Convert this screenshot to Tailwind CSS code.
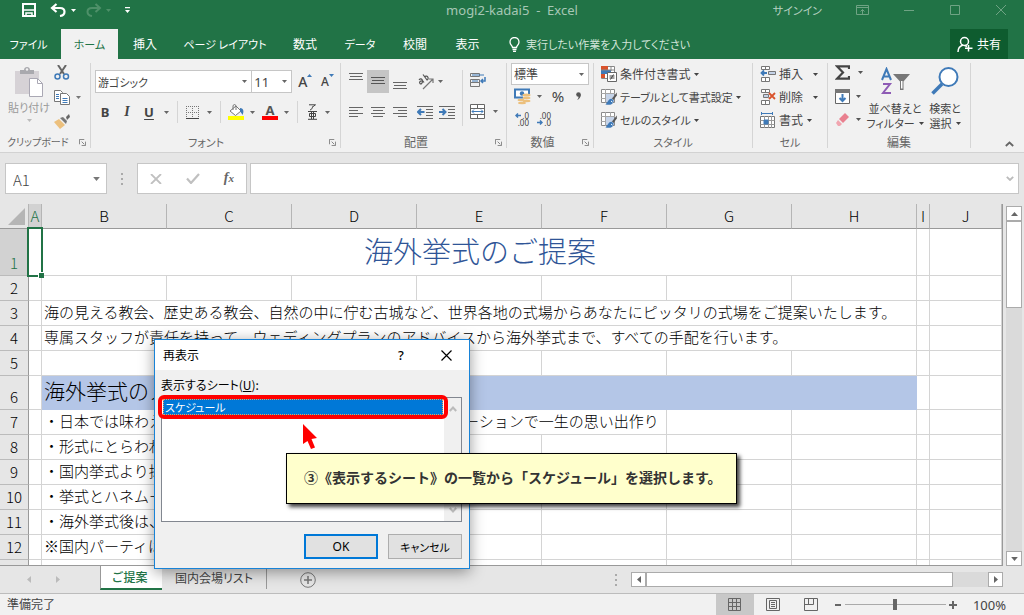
<!DOCTYPE html>
<html lang="ja">
<head>
<meta charset="utf-8">
<title>mogi2-kadai5 - Excel</title>
<script src="https://cdn.jsdelivr.net/npm/@tailwindcss/browser@4"></script>
</head>
<body class="relative flex h-screen flex-col overflow-hidden bg-[#e6e6e6] font-['Noto_Sans_CJK_JP',sans-serif] text-[12px] leading-4 text-[#444]">

<svg class="hidden" aria-hidden="true">
  <symbol id="dn" viewBox="0 0 5 3"><path d="M0 0h5L2.5 3z" fill="currentColor"/></symbol>
  <symbol id="launch" viewBox="0 0 8 8"><path d="M.5 6V.5H6M3 3l3 3M7.500 3v4.500H3" fill="none" stroke="#777"/></symbol>
  <symbol id="brushcell" viewBox="0 0 16 16">
    <path d="M.5.5h13v13H.5z" fill="#fff" stroke="#8a8a8a"/><path d="M5 5h8v8H5z" fill="#c5d3e8"/><path d="M0 4.500h14M0 9.500h5M4.500 0v14M9.500 0v5" stroke="#a5a5a5" fill="none"/>
    <path d="M15.800 3.500v3l-3.300 4.500-1.500-1.500z" fill="#555"/><path d="M11 10c-3-1-4 3-6.500 5.500 4 .8 8 .5 8-4z" fill="#3f7ab8"/><path d="M10 12l1.500 1.200" stroke="#fff"/>
  </symbol>
</svg>

<!-- Title bar -->
<header class="shrink-0 bg-[#217346] text-white">
  <div class="flex h-[29px] items-start pt-0.5">
    <div class="flex h-4 flex-1 items-center">
      <button aria-label="上書き保存" class="ml-[22px]"><svg class="block h-[14px] w-[14px]" viewBox="0 0 14 14"><path d="M1 1h12v12H1z" fill="none" stroke="#fff" stroke-width="2"/><path d="M1 7h12" stroke="#fff" stroke-width="1.500"/><path d="M4 13v-3h6v3" fill="none" stroke="#fff" stroke-width="1.500"/></svg></button>
      <button aria-label="元に戻す" class="ml-[14px]"><svg class="block h-[14px] w-4" viewBox="0 0 16 14"><path d="M2 5h8c6 0 6 7 0 8M6.500 1L2 5l4.500 4" fill="none" stroke="#fff" stroke-width="2.200"/></svg></button>
      <svg class="ml-[5px] h-[3px] w-[5px]"><use href="#dn"/></svg>
      <button aria-label="やり直し" class="ml-[10px] text-[#4e9069]"><svg class="block h-[14px] w-4" viewBox="0 0 16 14"><path d="M14 5H6c-6 0-6 7 0 8M9.500 1L14 5l-4.500 4" fill="none" stroke="currentColor" stroke-width="2"/></svg></button>
      <svg class="ml-1 h-[3px] w-[5px] text-[#4e9069]"><use href="#dn"/></svg>
      <button aria-label="クイック アクセス ツール バーのカスタマイズ" class="ml-[14px]"><svg class="block h-[7px] w-[5px]" viewBox="0 0 5 7"><path d="M0 0h5v1.200H0zM0 3h5L2.500 6z" fill="#fff"/></svg></button>
    </div>
    <h1 class="whitespace-pre font-['Noto_Sans','Noto_Sans_CJK_JP',sans-serif] text-[13px] text-[#a6c7b5]">mogi2-kadai5  -  Excel</h1>
    <div class="flex h-4 flex-1 items-center justify-end text-[#6fa384]">
      <a href="#" class="mr-[34px] text-[11px] text-[#b5d0c0] [font-feature-settings:'palt']">サインイン</a>
      <button aria-label="リボンの表示オプション"><svg class="block h-[11px] w-[13px]" viewBox="0 0 13 11" fill="none" stroke="currentColor"><path d="M.5.5h12v9H.5zM0 2.500h13M6.500 9V4.500M4.500 6.500l2-2 2 2"/></svg></button>
      <button aria-label="最小化" class="ml-[35px]"><svg class="block h-[11px] w-[10px]" viewBox="0 0 10 11"><path d="M0 5.500h10" stroke="currentColor"/></svg></button>
      <button aria-label="最大化" class="ml-9"><svg class="block h-[10px] w-[10px]" viewBox="0 0 10 10"><path d="M.5.5h9v9h-9z" fill="none" stroke="currentColor"/></svg></button>
      <button aria-label="閉じる" class="mr-[18px] ml-9"><svg class="block h-[10px] w-[10px]" viewBox="0 0 10 10"><path d="M0 0l10 10M10 0L0 10" stroke="currentColor"/></svg></button>
    </div>
  </div>
  <nav class="flex h-[30px] items-stretch text-[12px] whitespace-nowrap [font-feature-settings:'palt']">
    <button class="w-[61px] pr-1 text-[11px]">ファイル</button>
    <button class="w-[57px] bg-[#f1f1f1] text-[11px] text-[#217346]">ホーム</button>
    <button class="w-[54px]">挿入</button>
    <button class="w-[106px] text-[11px]">ページ レイアウト</button>
    <button class="w-[54px]">数式</button>
    <button class="w-[56px] text-[11px]">データ</button>
    <button class="w-[54px]">校閲</button>
    <button class="w-[51px]">表示</button>
    <button class="ml-4 flex items-center gap-1.5 text-[11px] text-[#d3e5da]">
      <svg class="h-[15px] w-[11px]" viewBox="0 0 11 15" fill="none" stroke="#fff" stroke-width="1.300"><path d="M3.500 10.500c0-2-2.500-2.500-2.500-5.500a4.500 4.500 0 019 0c0 3-2.500 3.500-2.500 5.500zM3.500 12.500h4M4 14.300h3"/></svg>
      実行したい作業を入力してください
    </button>
    <button class="mr-4 ml-auto flex w-[58px] items-center gap-1 bg-[#0e5c2f] pl-[7px]">
      <svg class="h-4 w-4" viewBox="0 0 16 16" fill="none" stroke="#fff" stroke-width="1.500"><circle cx="7.500" cy="5.500" r="4"/><path d="M1 16c0-4 2-6 5-7M8 9.500l2 1M11.500 9v6.500M8 12.300h7.500"/></svg>共有
    </button>
  </nav>
</header>

<!-- Ribbon -->
<section class="flex h-[94px] shrink-0 border-b border-[#d2d2d2] bg-[#f1f1f1] pt-1 pb-1 whitespace-nowrap [font-feature-settings:'palt']">
  <!-- Clipboard -->
  <div class="flex w-[91px] flex-col border-r border-[#d5d5d5]">
    <div class="flex h-[73px] shrink-0">
      <button class="flex w-[54px] flex-col items-center justify-start pt-1 pl-1 text-[#9a9a9a]">
        <svg class="h-[30px] w-7 shrink-0" viewBox="0 0 28 30"><path d="M0 4h24v23H0z" fill="#d6d2d6"/><path d="M5 7V3h4c0-4 6-4 6 0h4v4z" fill="#a9a9ae"/><circle cx="12" cy="2.500" r="1.200" fill="#f1f1f1"/><path d="M14.500 11.500h8l5 5v13h-13z" fill="#fff" stroke="#aaa8b4"/><path d="M22.500 11.500v5h5" fill="none" stroke="#aaa8b4"/></svg>
        <span class="mt-0.5 text-[11px]">貼り付け</span>
        <svg class="mt-1 h-[3px] w-[5px] text-[#bbb]"><use href="#dn"/></svg>
      </button>
      <div class="flex flex-col justify-between pt-0.5 pb-1.5">
        <button aria-label="切り取り"><svg class="block h-[15px] w-4" viewBox="0 0 16 15" fill="none"><path d="M4 0l6 9M12 0L6 9" stroke="#666" stroke-width="2"/><circle cx="3.500" cy="11.500" r="2.500" stroke="#3f7ab8" stroke-width="1.500"/><circle cx="12" cy="11.500" r="2.500" stroke="#3f7ab8" stroke-width="1.500"/></svg></button>
        <button aria-label="コピー" class="flex items-center gap-1.5 text-[#777]"><svg class="h-[15px] w-4" viewBox="0 0 16 15" fill="#fff" stroke="#777"><path d="M.5.5h6l2 2v9h-8z"/><path d="M6.500 3.500h6l3 3v8h-9z"/><path d="M2 4.500h3M2 6.500h3M2 8.500h3M8.500 8.500h5M8.500 10.500h5M8.500 12.500h5" stroke="#3f7ab8"/></svg><svg class="h-[3px] w-[5px]"><use href="#dn"/></svg></button>
        <button aria-label="書式のコピー"><svg class="block h-4 w-4" viewBox="0 0 16 16"><path d="M12 3l3-3 1 3-3 3z" fill="#666"/><path d="M6 4l3-1 4 4-1 3z" fill="#777"/><path d="M5 5l6 6-5 4L0 8z" fill="#ecc07d"/></svg></button>
      </div>
    </div>
    <div class="flex items-center justify-between pr-1 pl-[7px] text-[10px] leading-3 text-[#666]"><span>クリップボード</span><svg class="h-[7px] w-[7px]"><use href="#launch"/></svg></div>
  </div>
  <!-- Font -->
  <div class="flex w-[250px] flex-col border-r border-[#d5d5d5]">
    <div class="flex h-[73px] shrink-0 flex-col pl-1">
      <div class="mt-[7px] flex h-[23px] items-center">
        <div class="flex h-[23px] w-[158px] items-center border border-[#c6c6c6] bg-white pr-1"><select aria-label="フォント" class="min-w-0 flex-1 appearance-none pl-0.5 text-[11px] [font-feature-settings:'palt']"><option>游ゴシック</option></select><svg class="h-[3px] w-[5px] text-[#666]"><use href="#dn"/></svg></div>
        <div class="flex h-[23px] w-10 items-center border border-l-0 border-[#c6c6c6] bg-white pr-1"><select aria-label="フォント サイズ" class="min-w-0 flex-1 appearance-none pl-0.5 font-['Noto_Sans'] text-[13px]"><option>11</option></select><svg class="h-[3px] w-[5px] text-[#666]"><use href="#dn"/></svg></div>
        <button aria-label="フォント サイズの拡大" class="ml-1 flex w-[21px] items-start pl-0.5 font-['Noto_Sans'] text-[14px] font-medium"><span>A</span><svg class="h-[3px] w-[5px] text-[#3f7ab8]" viewBox="0 0 5 3"><path d="M0 3h5L2.500 0z" fill="currentColor"/></svg></button>
        <button aria-label="フォント サイズの縮小" class="ml-0.5 flex w-[21px] items-start pl-0.5 font-['Noto_Sans'] text-[12px] font-medium"><span>A</span><svg class="h-[3px] w-[5px] text-[#3f7ab8]"><use href="#dn"/></svg></button>
      </div>
      <div class="mt-2 flex h-[22px] items-center text-[#666]">
        <button aria-label="太字" class="w-5 font-['Noto_Sans'] text-[13px] font-bold text-[#444]">B</button>
        <button aria-label="斜体" class="w-6 font-['Liberation_Serif'] text-[14px] font-bold text-[#444] italic">I</button>
        <button aria-label="下線" class="w-5 font-['Noto_Sans'] text-[13px] font-bold text-[#444] underline underline-offset-2">U</button>
        <svg class="ml-[5px] h-[3px] w-[5px]"><use href="#dn"/></svg>
        <span class="ml-2 h-[22px] w-px bg-[#d5d5d5]"></span>
        <button aria-label="罫線" class="ml-2"><svg class="block h-[13px] w-[13px]" viewBox="0 0 13 13" fill="none" stroke="#777"><path d="M.5 0v12M6.500 0v12M12.500 0v12M0 .5h13M0 6.500h13" stroke-dasharray="1 1"/><path d="M0 12.500h13" stroke="#444"/></svg></button>
        <svg class="ml-2 h-[3px] w-[5px]"><use href="#dn"/></svg>
        <span class="ml-2 h-[22px] w-px bg-[#d5d5d5]"></span>
        <button aria-label="塗りつぶしの色" class="ml-[7px]"><svg class="block h-4 w-4" viewBox="0 0 16 16"><path d="M2 7l6-5 5 5-5.500 4.500z" fill="#fff" stroke="#777"/><path d="M5 6V1.500q1.500-2 3 0V6" fill="none" stroke="#777"/><path d="M12 4c4 0 4 4 2.500 7-1-2-1.500-2-2.500-4z" fill="#3f7ab8"/><path d="M0 12h16v4H0z" fill="#ff0"/></svg></button>
        <svg class="ml-1.5 h-[3px] w-[5px]"><use href="#dn"/></svg>
        <button aria-label="フォントの色" class="ml-[7px] flex w-4 flex-col items-center"><span class="h-3 font-['Noto_Sans'] text-[13px] leading-3 font-bold text-[#555]">A</span><span class="h-1 w-4 bg-[#f00]"></span></button>
        <svg class="ml-1.5 h-[3px] w-[5px]"><use href="#dn"/></svg>
        <span class="ml-2 h-[22px] w-px bg-[#d5d5d5]"></span>
        <button aria-label="ふりがなの表示" class="ml-2.5"><svg class="block h-4 w-[9px]" viewBox="0 0 9 16" fill="none" stroke="#444"><path d="M1 .8h6.500L4.500 3M4.500 2.500C4.500 4.500 3.500 5.500 2 6M0 7.500h9M1.500 9.500h6v3h-6zM3.500 7.500v7.500M5.500 7.500v7.500M0 15.300h9"/></svg></button>
        <svg class="ml-2 h-[3px] w-[5px]"><use href="#dn"/></svg>
      </div>
    </div>
    <div class="flex items-center pr-1 text-[11px] leading-3 text-[#666]"><span class="flex-1 pr-2 text-center">フォント</span><svg class="h-[7px] w-[7px]"><use href="#launch"/></svg></div>
  </div>
  <!-- Alignment -->
  <div class="flex w-[166px] flex-col border-r border-[#d5d5d5]">
    <div class="flex h-[73px] shrink-0 pt-[7px] text-[#666]">
      <div class="flex w-[121px] flex-col gap-2 pl-1">
        <div class="flex h-[23px] items-center">
          <button aria-label="上揃え" class="w-[22px]"><svg class="mx-auto block h-[23px] w-[14px]" viewBox="0 0 14 23" stroke="#666"><path d="M0 3.500h14M1 6.500h12M0 9.500h14"/></svg></button>
          <button aria-label="上下中央揃え" class="w-[22px] bg-[#c5c5c5]"><svg class="mx-auto block h-[23px] w-[14px]" viewBox="0 0 14 23" stroke="#555"><path d="M0 7.500h14M1 10.500h12M0 13.500h14"/></svg></button>
          <button aria-label="下揃え" class="w-[22px]"><svg class="mx-auto block h-[23px] w-[14px]" viewBox="0 0 14 23" stroke="#666"><path d="M0 12.500h14M1 15.500h12M0 18.500h14"/></svg></button>
          <button aria-label="方向" class="ml-1.5 flex items-center gap-1"><svg class="h-[17px] w-[17px]" viewBox="0 0 17 17" fill="none" stroke="#555"><path d="M2 7c1.500-2 3-1 3.500.5l1.500 2M5.500 8C3 7.500 2 9.500 3 10.500s2.500 0 2.500-2.500M6 1.500l4 5.500M7.500 4c1-1.500 3-1 3.500.5S10.500 7 9.500 7" stroke-width="1.200"/><path d="M6 16l9.500-9.500M12 6h4v4" stroke="#777" stroke-width="1.200"/></svg><svg class="h-[3px] w-[5px]"><use href="#dn"/></svg></button>
        </div>
        <div class="flex h-[22px] items-center">
          <button aria-label="左揃え" class="w-[22px]"><svg class="mx-auto block h-3 w-[14px]" viewBox="0 0 14 12" stroke="#666"><path d="M0 1.500h14M0 4.500h9M0 7.500h14M0 10.500h9"/></svg></button>
          <button aria-label="中央揃え" class="w-[22px]"><svg class="mx-auto block h-3 w-[14px]" viewBox="0 0 14 12" stroke="#666"><path d="M0 1.500h14M2 4.500h10M0 7.500h14M2 10.500h10"/></svg></button>
          <button aria-label="右揃え" class="w-[22px]"><svg class="mx-auto block h-3 w-[14px]" viewBox="0 0 14 12" stroke="#666"><path d="M0 1.500h14M5 4.500h9M0 7.500h14M5 10.500h9"/></svg></button>
          <button aria-label="インデントを減らす" class="ml-1.5"><svg class="block h-[14px] w-4" viewBox="0 0 16 14" fill="none"><path d="M0 1.500h16M9 4.500h7M9 7.500h7M9 10.500h7M0 13.500h16" stroke="#666"/><path d="M7.500 7H1M4 4L1 7l3 3" stroke="#3f7ab8" stroke-width="2"/></svg></button>
          <button aria-label="インデントを増やす" class="ml-1.5"><svg class="block h-[14px] w-4" viewBox="0 0 16 14" fill="none"><path d="M0 1.500h16M9 4.500h7M9 7.500h7M9 10.500h7M0 13.500h16" stroke="#666"/><path d="M0 7h6.500M3.500 4l3 3-3 3" stroke="#3f7ab8" stroke-width="2"/></svg></button>
        </div>
      </div>
      <div class="mb-[10px] flex flex-col gap-4 border-l border-[#d5d5d5] pt-0.5 pl-[7px]">
        <button aria-label="折り返して全体を表示する"><svg class="block h-4 w-4" viewBox="0 0 16 16" fill="none"><path d="M.5 1.500h9v3h-9zM.5 7.500h9v3h-9zM.5 10.500h9v4h-9z" stroke="#777"/><path d="M2 3h12M2 9h6" stroke="#3f7ab8"/><path d="M15 5v4h-4M13 7l-2 2 2 2" stroke="#3f7ab8" stroke-width="1.500"/></svg></button>
        <button aria-label="セルを結合して中央揃え" class="flex items-center gap-2"><svg class="h-[15px] w-[15px]" viewBox="0 0 15 15" fill="none"><path d="M.5.500h14v14H.5zM.5 4.500h14M.5 10.500h14M7.500 0v4M7.500 11v4" stroke="#666" fill="#fff"/><path d="M2 7.500h11M4 5.500l-2 2 2 2M11 5.500l2 2-2 2" stroke="#3f7ab8"/></svg><svg class="h-[3px] w-[5px]"><use href="#dn"/></svg></button>
      </div>
    </div>
    <div class="flex items-center pr-1 leading-3 text-[#666]"><span class="flex-1 pr-1 text-center">配置</span><svg class="h-[7px] w-[7px]"><use href="#launch"/></svg></div>
  </div>
  <!-- Number -->
  <div class="flex w-[87px] flex-col border-r border-[#d5d5d5]">
    <div class="flex h-[73px] shrink-0 flex-col pl-1 text-[#666]">
      <div class="flex h-[22px] w-[78px] items-center border border-[#c6c6c6] bg-white pr-1"><select aria-label="表示形式" class="min-w-0 flex-1 appearance-none pl-0.5 text-[12px] text-[#444]"><option>標準</option></select><svg class="h-[3px] w-[5px]"><use href="#dn"/></svg></div>
      <div class="mt-0.5 flex h-[18px] items-center pl-[3px]">
        <button aria-label="通貨表示形式" class="flex items-center gap-1.5"><svg class="h-[17px] w-[17px]" viewBox="0 0 17 17"><path d="M1 1.500h14v8H1z" fill="#fff" stroke="#3f7ab8" stroke-width="2"/><circle cx="8" cy="5.500" r="2.200" fill="#3f7ab8"/><path d="M9 6h7v9H9z" fill="#f1f1f1"/><g fill="#ecc07d"><ellipse cx="12.500" cy="7" rx="4" ry="1.500"/><ellipse cx="12.500" cy="10" rx="4" ry="1.200"/><ellipse cx="12.500" cy="13" rx="4" ry="1.200"/><ellipse cx="7" cy="12" rx="3.500" ry="1.200"/><ellipse cx="8" cy="15" rx="4" ry="1.200"/></g></svg><svg class="h-[3px] w-[5px]"><use href="#dn"/></svg></button>
        <button aria-label="パーセント スタイル" class="ml-2 w-4 font-['Noto_Sans'] text-[15px] text-[#444]">%</button>
        <button aria-label="桁区切りスタイル" class="ml-1.5 h-[18px] w-3"><svg class="mx-auto block h-2 w-[5px]" viewBox="0 0 5 8"><circle cx="2.500" cy="2.500" r="2.300" fill="#555"/><path d="M4.800 2.500c0 3-1.500 4.500-3.800 5.500 1.500-1.500 1.500-2 1.500-4z" fill="#555"/></svg></button>
      </div>
      <div class="mt-1 flex h-5 items-center gap-[7px] pl-[3px] font-['Noto_Sans'] text-[8px] leading-[7px] text-[#444]">
        <button aria-label="小数点以下の表示桁数を増やす" class="flex w-[15px] flex-col items-end"><span class="flex items-center gap-px"><svg class="h-[5px] w-[6px]" viewBox="0 0 6 5"><path d="M6 2.500H1M3 .5l-2 2 2 2" fill="none" stroke="#3f7ab8" stroke-width="1.500"/></svg>.0</span><span>.00</span></button>
        <button aria-label="小数点以下の表示桁数を減らす" class="flex w-[15px] flex-col items-end"><span>.00</span><span class="flex items-center gap-px"><svg class="h-[5px] w-[6px]" viewBox="0 0 6 5"><path d="M0 2.500h5M3 .5l2 2-2 2" fill="none" stroke="#3f7ab8" stroke-width="1.500"/></svg>.0</span></button>
      </div>
    </div>
    <div class="flex items-center pr-1 leading-3 text-[#666]"><span class="flex-1 pr-1 text-center">数値</span><svg class="h-[7px] w-[7px]"><use href="#launch"/></svg></div>
  </div>
  <!-- Styles -->
  <div class="flex w-[159px] flex-col border-r border-[#d5d5d5]">
    <div class="flex h-[73px] shrink-0 flex-col gap-[7px] pt-[3px] pl-[7px]">
      <button class="flex h-4 items-center gap-[3px]"><svg class="h-4 w-4" viewBox="0 0 16 16"><path d="M.5.500h13v12H.5z" fill="#fff" stroke="#888"/><path d="M0 0h7v4H0zM0 8h4v4H0z" fill="#d9532c"/><path d="M0 4h10v4H0z" fill="#3f7ab8"/><path d="M10 0v5M0 4h14" stroke="#888"/><path d="M6.500 6.500h9v9h-9z" fill="#fff" stroke="#666"/><path d="M8.500 10h5M8.500 12h5M12.500 8.500l-3 5" stroke="#444"/></svg>条件付き書式<svg class="h-[3px] w-[5px]"><use href="#dn"/></svg></button>
      <button class="flex h-4 items-center gap-[3px] text-[11px]"><svg class="h-4 w-4"><use href="#brushcell"/></svg>テーブルとして書式設定<svg class="h-[3px] w-[5px]"><use href="#dn"/></svg></button>
      <button class="flex h-4 items-center gap-[3px] text-[11px]"><svg class="h-4 w-4"><use href="#brushcell"/></svg>セルのスタイル<svg class="h-[3px] w-[5px]"><use href="#dn"/></svg></button>
    </div>
    <div class="text-center text-[11px] leading-3 text-[#666]">スタイル</div>
  </div>
  <!-- Cells -->
  <div class="flex w-[75px] flex-col border-r border-[#d5d5d5]">
    <div class="flex h-[73px] shrink-0 flex-col gap-[7px] pt-[3px] pl-[7px]">
      <button class="flex h-4 items-center gap-[3px]"><svg class="h-4 w-4" viewBox="0 0 16 16" fill="#fff" stroke="#777"><path d="M1.500.500h8v3h-8zM1.500 11.500h8v4h-8zM5.500 0v4M5.500 11v5"/><path d="M8.500 5.500h7v3h-7z" fill="#c5d3e8"/><path d="M7 7H1M4 4.500L1.500 7 4 9.500" fill="none" stroke="#3f7ab8" stroke-width="1.800"/></svg>挿入<svg class="ml-[7px] h-[3px] w-[5px]"><use href="#dn"/></svg></button>
      <button class="flex h-4 items-center gap-[3px]"><svg class="h-4 w-4" viewBox="0 0 16 16" fill="#fff" stroke="#777"><path d="M1.500.500h8v3h-8zM1.500 11.500h8v4h-8zM5.500 0v4M5.500 11v5"/><path d="M3.500 5.500h5v3h-5z" fill="#c5d3e8"/><path d="M9 4l6 6M15 4l-6 6" stroke="#d9532c" stroke-width="1.800"/></svg>削除<svg class="ml-[7px] h-[3px] w-[5px]"><use href="#dn"/></svg></button>
      <button class="flex h-4 items-center gap-[3px]"><svg class="h-4 w-4" viewBox="0 0 16 16" fill="none" stroke="#777"><path d="M.5 4.500h14v11H.5z" fill="#fff"/><path d="M.5 8.500h14M.5 12.500h14M4.500 4v12M8.500 4v12M11.500 4v12" stroke="#999"/><path d="M4 8h4v4H4z" fill="#3f7ab8" stroke="#3f7ab8"/><path d="M1 1.500h12M1.500 0v3M12.500 0v3" stroke="#3f7ab8"/></svg>書式<svg class="ml-px h-[3px] w-[5px]"><use href="#dn"/></svg></button>
    </div>
    <div class="text-center text-[11px] leading-3 text-[#666]">セル</div>
  </div>
  <!-- Editing -->
  <div class="flex w-[143px] flex-col border-r border-[#d5d5d5]">
    <div class="flex h-[73px] shrink-0 text-[#555]">
      <div class="flex w-9 flex-col gap-2 pt-0.5 pl-[7px]">
        <button aria-label="合計" class="flex h-[15px] items-center gap-2"><svg class="h-[15px] w-[15px]" viewBox="0 0 15 15"><path d="M14 4V1.300H2L8 7.500 2 13.700h12V11" fill="none" stroke="#444" stroke-width="2.200"/></svg><svg class="h-[3px] w-[5px]"><use href="#dn"/></svg></button>
        <button aria-label="フィル" class="flex h-4 items-center gap-1.5"><svg class="h-[15px] w-[15px]" viewBox="0 0 15 15"><path d="M.5.500h14v14H.5z" fill="#fff" stroke="#666"/><path d="M0 0h15v4H0z" fill="#777"/><path d="M7.500 5v7M4.500 9l3 3 3-3" fill="none" stroke="#3f7ab8" stroke-width="2"/></svg><svg class="h-[3px] w-[5px]"><use href="#dn"/></svg></button>
        <button aria-label="クリア" class="flex h-[15px] items-center gap-1.5"><svg class="h-[13px] w-[15px]" viewBox="0 0 15 13"><path d="M4 6l6-6 4 4-6 6z" fill="#e9808f"/><path d="M3 7l4 4-2 2H3L1 10z" fill="#f1a6b0"/></svg><svg class="h-[3px] w-[5px]"><use href="#dn"/></svg></button>
      </div>
      <button class="flex w-[62px] flex-col items-center justify-start pt-1 text-[11px] leading-[15px] text-[#444]">
        <svg class="mb-1.5 h-7 w-[29px] shrink-0" viewBox="0 0 29 28" fill="none"><path d="M1 13L5.500 2 10 13M2.500 9.500h6" stroke="#3f7ab8" stroke-width="2"/><path d="M2 17h7L2 26h8" stroke="#8e5bb5" stroke-width="2"/><path d="M12 7h17l-6.500 7.500V23h-3.500v-8.500z" fill="#777"/><path d="M20 14h1.500v7.500H20z" fill="#fff"/></svg>
        <span>並べ替えと</span>
        <span class="flex items-center gap-1">フィルター<svg class="h-[3px] w-[5px]"><use href="#dn"/></svg></span>
      </button>
      <button class="flex w-[38px] flex-col items-center justify-start pt-1 text-[11px] leading-[15px] text-[#444]">
        <svg class="mb-1.5 h-7 w-7 shrink-0" viewBox="0 0 28 28" fill="none" stroke="#3f7ab8"><circle cx="17.500" cy="10" r="9" fill="#fff" stroke-width="2"/><path d="M11 17l-9.500 9.500" stroke-width="3.500"/></svg>
        <span>検索と</span>
        <span class="flex items-center gap-1">選択<svg class="h-[3px] w-[5px]"><use href="#dn"/></svg></span>
      </button>
    </div>
    <div class="text-center leading-3 text-[#666]">編集</div>
  </div>
  <button aria-label="リボンを折りたたむ" class="mt-auto mr-2.5 mb-px ml-auto"><svg class="block h-[6px] w-[9px]" viewBox="0 0 9 6"><path d="M.8 5l3.700-3.500L8.200 5" fill="none" stroke="#666" stroke-width="1.800"/></svg></button>
</section>

<!-- Formula bar -->
<section class="flex h-[51px] shrink-0 items-start px-[5px] pt-[10px]">
  <div class="flex h-[31px] w-[102px] items-center border border-[#c6c6c6] bg-white pr-1.5"><input aria-label="名前ボックス" value="A1" class="min-w-0 flex-1 pt-0.5 pl-[7px] text-[15px] font-light outline-none"><svg class="h-1 w-[7px] text-[#777]"><use href="#dn"/></svg></div>
  <div class="flex h-[31px] w-[30px] flex-col items-center justify-center gap-[3px]"><i class="size-0.5 bg-[#aaa]"></i><i class="size-0.5 bg-[#aaa]"></i><i class="size-0.5 bg-[#aaa]"></i></div>
  <div class="flex h-[31px] w-[110px] items-center justify-between border border-[#c6c6c6] bg-white px-3">
    <button aria-label="キャンセル"><svg class="block h-[10px] w-3" viewBox="0 0 12 10"><path d="M1 0l10 10M11 0L1 10" stroke="#c0c0c0" stroke-width="1.800"/></svg></button>
    <button aria-label="入力"><svg class="block h-[11px] w-[14px]" viewBox="0 0 14 11"><path d="M1 5.500L5 10l8-9" fill="none" stroke="#c0c0c0" stroke-width="2.200"/></svg></button>
    <button aria-label="関数の挿入" class="pb-0.5 font-['Liberation_Serif'] text-[14px] font-bold text-[#666] italic">f<span class="text-[11px]">x</span></button>
  </div>
  <div class="ml-[3px] flex h-[31px] flex-1 items-center border border-[#c6c6c6] bg-white pr-1"><input aria-label="数式バー" class="min-w-0 flex-1 px-1 outline-none"><svg class="h-[5px] w-2" viewBox="0 0 8 5"><path d="M.8.800L4 4 7.200.800" fill="none" stroke="#bbb" stroke-width="1.800"/></svg></div>
</section>

<!-- Worksheet -->
<main class="flex min-h-0 flex-1">
  <div class="relative min-w-0 flex-1 overflow-hidden border-r border-b border-[#999] bg-white">
    <table class="w-full table-fixed border-separate border-spacing-0 text-[15px] leading-[22px] font-light whitespace-nowrap text-black [&_td]:border-r [&_td]:border-b [&_td]:border-[#d4d4d4] [&_td]:p-0 [&_td]:pb-0.5 [&_td]:pl-0.5 [&_tbody_th]:border-r [&_tbody_th]:border-b [&_tbody_th]:border-r-[#999] [&_tbody_th]:border-b-[#bbb] [&_tbody_th]:bg-[#e6e6e6] [&_tbody_th]:align-bottom [&_th]:p-0 [&_th]:font-light [&_tbody_th]:pb-px [&_thead_th]:border-r [&_thead_th]:border-b [&_thead_th]:border-r-[#b5b5b5] [&_thead_th]:border-b-[#999] [&_thead_th]:bg-[#e6e6e6]">
      <colgroup><col class="w-[29px]"><col class="w-[13px]"><col class="w-[125px]"><col class="w-[125px]"><col class="w-[125px]"><col class="w-[125px]"><col class="w-[125px]"><col class="w-[125px]"><col class="w-[125px]"><col class="w-[13px]"><col></colgroup>
      <thead>
        <tr class="h-[25px]">
          <th><button aria-label="すべて選択" class="block pl-2"><svg class="block h-[17px] w-[17px]" viewBox="0 0 17 17"><path d="M17 0v17H0z" fill="#b5b5b5"/></svg></button></th>
          <th class="bg-[#d2d2d2]! text-[#217346]">A</th><th>B</th><th>C</th><th>D</th><th>E</th><th>F</th><th>G</th><th>H</th><th>I</th><th>J</th>
        </tr>
      </thead>
      <tbody>
        <tr class="h-[47px]"><th class="bg-[#d2d2d2]! text-[#217346]">1</th><td></td><td colspan="7" class="pb-1! text-center text-[29px] leading-[40px] text-[#2f5597]">海外挙式のご提案</td><td></td><td></td></tr>
        <tr class="h-[25px]"><th>2</th><td></td><td></td><td></td><td></td><td></td><td></td><td></td><td></td><td></td><td></td></tr>
        <tr class="h-[25px]"><th>3</th><td></td><td colspan="7">海の見える教会、歴史ある教会、自然の中に佇む古城など、世界各地の式場からあなたにピッタリの式場をご提案いたします。</td><td></td><td></td></tr>
        <tr class="h-[25px]"><th>4</th><td></td><td colspan="7">専属スタッフが責任を持って、ウェディングプランのアドバイスから海外挙式まで、すべての手配を行います。</td><td></td><td></td></tr>
        <tr class="h-[25px]"><th>5</th><td></td><td></td><td></td><td></td><td></td><td></td><td></td><td></td><td></td><td></td></tr>
        <tr class="h-[34px]"><th>6</th><td></td><td colspan="7" class="border-[#b4c6e7]! bg-[#b4c6e7] pb-[5px]! text-[21px] leading-[28px]">海外挙式のメリット</td><td></td><td></td></tr>
        <tr class="h-[25px]"><th>7</th><td></td><td colspan="5">・日本では味わえない雄大な自然や歴史ある街並みなどのロケーションで一生の思い出作り</td><td></td><td></td><td></td><td></td></tr>
        <tr class="h-[25px]"><th>8</th><td></td><td colspan="3">・形式にとらわれない自由な挙式</td><td></td><td></td><td></td><td></td><td></td><td></td></tr>
        <tr class="h-[25px]"><th>9</th><td></td><td colspan="3">・国内挙式より抑えられる費用</td><td></td><td></td><td></td><td></td><td></td><td></td></tr>
        <tr class="h-[25px]"><th>10</th><td></td><td colspan="3">・挙式とハネムーンを一緒に</td><td></td><td></td><td></td><td></td><td></td><td></td></tr>
        <tr class="h-[25px]"><th>11</th><td></td><td colspan="3">・海外挙式後は、国内でパーティ</td><td></td><td></td><td></td><td></td><td></td><td></td></tr>
        <tr class="h-[25px]"><th>12</th><td></td><td colspan="3">※国内パーティは別途料金です</td><td></td><td></td><td></td><td></td><td></td><td></td></tr>
        <tr class="h-[25px]"><th></th><td></td><td></td><td></td><td></td><td></td><td></td><td></td><td></td><td></td><td></td></tr>
      </tbody>
    </table>
    <!-- Active cell frame -->
    <div class="absolute top-[23px] left-[27px] h-[50px] w-4 border-2 border-[#217346]"><i class="absolute -right-[3px] -bottom-[3px] size-1.5 border-t border-l border-white bg-[#217346]"></i></div>
  </div>
  <div class="flex w-[21px] flex-col pt-0.5 pr-0.5 pl-[3px]">
    <button aria-label="上へスクロール" class="flex h-[15px] items-center justify-center border border-[#ababab] bg-white"><svg class="h-1 w-[7px]" viewBox="0 0 7 4"><path d="M0 4h7L3.500 0z" fill="#666"/></svg></button>
    <div class="flex-1 bg-[#dadada]"><div class="h-[87px] border border-[#ababab] bg-white"></div></div>
    <button aria-label="下へスクロール" class="flex h-[15px] items-center justify-center border border-[#ababab] bg-white text-[#666]"><svg class="h-1 w-[7px]"><use href="#dn"/></svg></button>
  </div>
</main>

<!-- Sheet tabs -->
<section class="flex h-[27px] shrink-0 items-center whitespace-nowrap">
  <div class="flex w-[100px] items-center gap-[25px] pl-[27px]">
    <button aria-label="前のシート"><svg class="block h-[7px] w-1" viewBox="0 0 4 7"><path d="M4 0v7L0 3.500z" fill="#bbb"/></svg></button>
    <button aria-label="次のシート"><svg class="block h-[7px] w-1" viewBox="0 0 4 7"><path d="M0 0v7l4-3.500z" fill="#bbb"/></svg></button>
  </div>
  <button class="h-6 w-[62px] self-start border-b-2 border-l border-b-[#217346] border-l-[#999] bg-white pr-1 font-medium text-[#217346]">ご提案</button>
  <button class="h-[23px] w-[105px] self-start border-r border-[#999] [font-feature-settings:'palt']">国内会場リスト</button>
  <button aria-label="新しいシート" class="ml-[33px]"><svg class="block h-4 w-4" viewBox="0 0 16 16" fill="none" stroke="#777"><circle cx="8" cy="8" r="7.300"/><path d="M8 4v8M4 8h8" stroke-width="1.500"/></svg></button>
  <div class="mr-[14px] ml-auto flex flex-col gap-[3px]"><i class="size-0.5 bg-[#aaa]"></i><i class="size-0.5 bg-[#aaa]"></i><i class="size-0.5 bg-[#aaa]"></i></div>
  <div class="mr-[21px] flex h-[15px] w-[372px]">
    <button aria-label="左へスクロール" class="flex w-[15px] items-center justify-center border border-[#ababab] bg-white"><svg class="h-[7px] w-1" viewBox="0 0 4 7"><path d="M4 0v7L0 3.500z" fill="#666"/></svg></button>
    <div class="flex-1 bg-[#dadada]"><div class="h-[15px] w-[307px] border border-[#ababab] bg-white"></div></div>
    <button aria-label="右へスクロール" class="flex w-[15px] items-center justify-center border border-[#ababab] bg-white"><svg class="h-[7px] w-1" viewBox="0 0 4 7"><path d="M0 0v7l4-3.500z" fill="#666"/></svg></button>
  </div>
</section>

<!-- Status bar -->
<footer class="flex h-[22px] shrink-0 items-stretch border-t border-[#bcbcbc] bg-[#f1f1f1] text-[#444]">
  <span class="mr-auto pt-0.5 pl-[7px]">準備完了</span>
  <button aria-label="標準" class="w-[38px] bg-[#c8c8c8]"><svg class="mx-auto block h-[13px] w-[13px]" viewBox="0 0 13 13" fill="none" stroke="#666"><path d="M.5.500h12v12H.5zM4.500 0v13M8.500 0v13M0 4.500h13M0 8.500h13"/></svg></button>
  <button aria-label="ページ レイアウト" class="w-[38px]"><svg class="mx-auto block h-[13px] w-[14px]" viewBox="0 0 14 13" fill="none" stroke="#666"><path d="M.5.500h13v12H.5zM3.500 2.500h7v8h-7zM5 4.500h4M5 6.500h4M5 8.500h4"/></svg></button>
  <button aria-label="改ページ プレビュー" class="w-[38px]"><svg class="mx-auto block h-[13px] w-[14px]" viewBox="0 0 14 13" fill="none" stroke="#666"><path d="M.5.500h13v12H.5zM4.500 0v6.500M9.500 0v6.500M0 6.500h9.500"/></svg></button>
  <button aria-label="縮小" class="ml-1 w-2"><svg class="block h-2 w-2" viewBox="0 0 8 8"><path d="M1 4h6" stroke="#666" stroke-width="2"/></svg></button>
  <input type="range" aria-label="ズーム" class="mx-[3px] my-auto h-px w-[101px] appearance-none bg-[#aaa] [&::-webkit-slider-thumb]:h-[11px] [&::-webkit-slider-thumb]:w-1 [&::-webkit-slider-thumb]:appearance-none [&::-webkit-slider-thumb]:bg-[#666]">
  <button aria-label="拡大" class="w-2"><svg class="block h-2 w-2" viewBox="0 0 8 8"><path d="M0 4h8M4 0v8" stroke="#666" stroke-width="2"/></svg></button>
  <button class="mr-[18px] ml-4 font-['Noto_Sans'] text-[13px]">100%</button>
</footer>

<!-- Unhide dialog -->
<div role="dialog" aria-labelledby="dlg-title" class="absolute top-[339px] left-[154px] flex w-[316px] flex-col border border-[#1883d7] bg-[#f0f0f0] text-black shadow-[0_3px_14px_rgba(0,0,0,0.4)]">
  <div class="flex h-[30px] items-center bg-white pr-[17px] pl-2">
    <h2 id="dlg-title" class="flex-1">再表示</h2>
    <button aria-label="ヘルプ" class="w-3 font-['Noto_Sans'] text-[13px] font-medium">?</button>
    <button aria-label="閉じる" class="ml-[34px]"><svg class="block h-[11px] w-[11px]" viewBox="0 0 11 11"><path d="M.5.500l10 10M10.500.500l-10 10" stroke="#000" stroke-width="1.200"/></svg></button>
  </div>
  <div class="pt-[7px] pr-[7px] pb-[9px] pl-1.5">
    <div id="list-label" class="h-5 [font-feature-settings:'palt']">表示するシート(<u>U</u>):</div>
    <div class="flex h-[125px] border border-[#828790] bg-white">
      <div role="listbox" aria-labelledby="list-label" class="relative flex-1 p-px">
        <div role="option" aria-selected="true" class="h-4 border border-dotted border-[#e8a060] bg-[#0078d7] pl-px text-[11px] leading-[14px] text-white [font-feature-settings:'palt']">スケジュール</div>
        <div class="absolute -top-[3px] -right-[4px] -left-[4px] h-6 rounded-[6px] border-4 border-[#f00]"></div>
      </div>
      <div class="flex w-[17px] flex-col items-center justify-between bg-[#f0f0f0] py-2">
        <svg class="h-[6px] w-2" viewBox="0 0 8 6"><path d="M.8 5L4 1.500 7.200 5" fill="none" stroke="#bbb" stroke-width="2"/></svg>
        <svg class="h-[6px] w-2" viewBox="0 0 8 6"><path d="M.8 1L4 4.500 7.200 1" fill="none" stroke="#bbb" stroke-width="2"/></svg>
      </div>
    </div>
    <div class="mt-3 flex justify-end gap-[10px]">
      <button class="h-[25px] w-[74px] border-2 border-[#0078d7] bg-[#e1e1e1] font-['Noto_Sans'] text-[12px]">OK</button>
      <button class="h-[25px] w-[74px] border border-[#adadad] bg-[#e1e1e1] text-[11px] [font-feature-settings:'palt']">キャンセル</button>
    </div>
  </div>
</div>

<!-- Pointer and step callout -->
<svg class="absolute top-[424px] left-[303px] h-[26px] w-[15px]" viewBox="0 0 15 26"><path d="M0 0l14 14-5.500 1 3.500 8.500-4 1.500-3.500-8L0 20z" fill="#f00"/></svg>
<div class="absolute top-[453px] left-[286px] w-[451px] border border-black bg-[#ffffcc] pt-[13px] pb-4 pl-[17px] text-[14px] leading-5 font-bold whitespace-nowrap text-[#333] shadow-[3px_3px_4px_rgba(0,0,0,0.75)]">③《表示するシート》の一覧から「スケジュール」を選択します。</div>

</body>
</html>
